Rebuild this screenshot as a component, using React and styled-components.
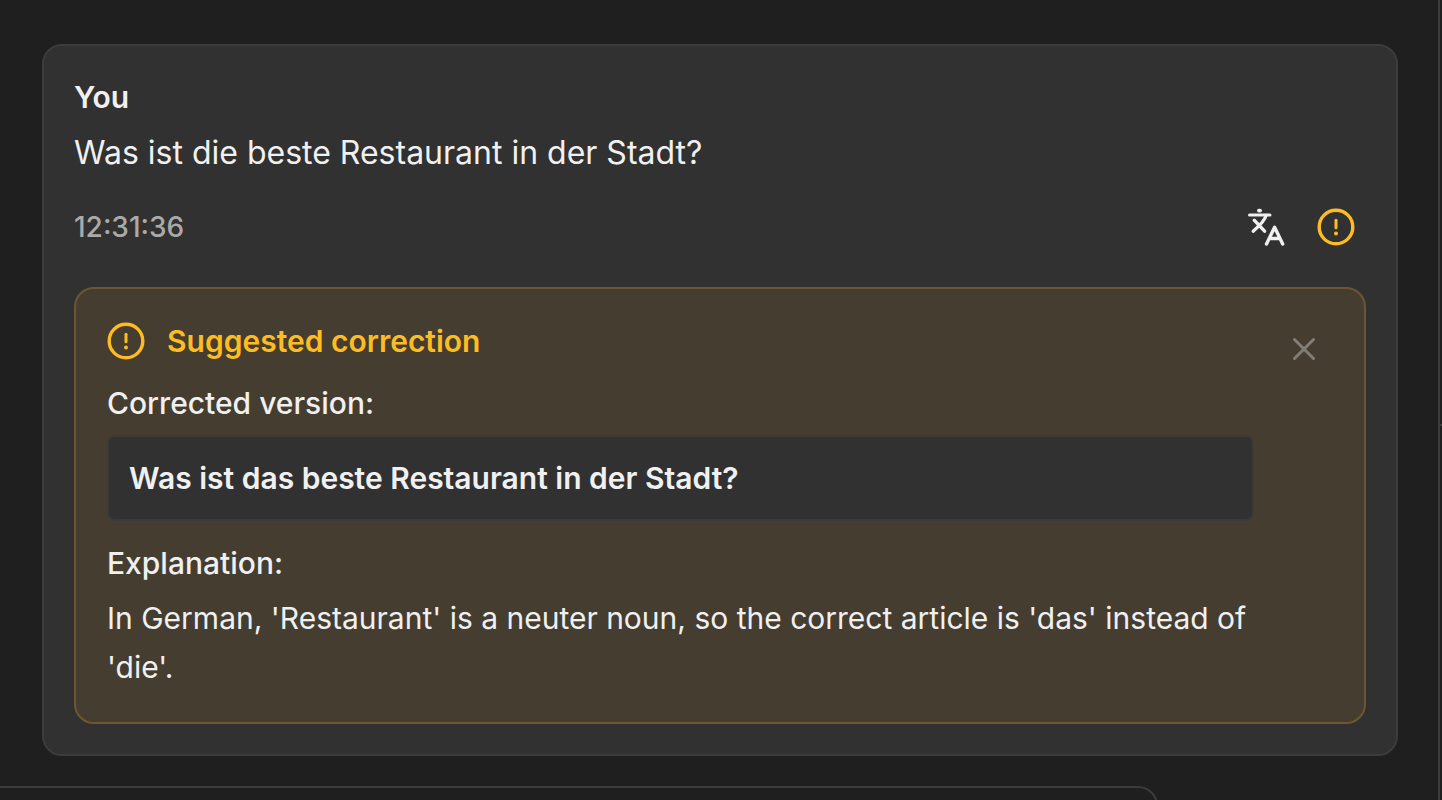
import React from 'react'
import styled, { createGlobalStyle } from 'styled-components'

const App = () => {
  return (
    <>
      <GlobalStyle />
      <Page>
        <Chat>
          <Message>
            <Author>You</Author>
            <MessageText>Was ist die beste Restaurant in der Stadt?</MessageText>
            <MessageFooter>
              <Time>12:31:36</Time>
              <Actions>
                <IconButton type="button" aria-label="Translate">
                  <TranslateIcon />
                </IconButton>
                <IconButton type="button" aria-label="Show correction" $warning>
                  <AlertIcon />
                </IconButton>
              </Actions>
            </MessageFooter>
            <Correction>
              <CorrectionBody>
                <CorrectionTitle>
                  <AlertIcon />
                  Suggested correction
                </CorrectionTitle>
                <Label>Corrected version:</Label>
                <Corrected>Was ist das beste Restaurant in der Stadt?</Corrected>
                <Label>Explanation:</Label>
                <Explanation>
                  In German, 'Restaurant' is a neuter noun, so the correct article is 'das' instead of 'die'.
                </Explanation>
              </CorrectionBody>
              <CloseButton type="button" aria-label="Dismiss">
                <CloseIcon />
              </CloseButton>
            </Correction>
          </Message>
          <Reply />
        </Chat>
        <Side>
          <SideTop />
        </Side>
      </Page>
    </>
  )
}

export default App

const AlertIcon = () => (
  <svg width="38" height="38" viewBox="0 0 38 38" fill="none" stroke="currentColor" strokeLinecap="round">
    <circle cx="19" cy="19" r="16.8" strokeWidth="3.4" />
    <path d="M19 12.2v7.6" strokeWidth="3" />
    <circle cx="19" cy="25.4" r="2" fill="currentColor" stroke="none" />
  </svg>
)

const TranslateIcon = () => (
  <svg width="38" height="38" viewBox="0 0 38 38" fill="none" stroke="currentColor" strokeWidth="3.4" strokeLinecap="round" strokeLinejoin="round">
    <path d="M2.5 7h20.5" strokeWidth="3" />
    <path d="M11.9 2.6h1.2" strokeWidth="3.8" />
    <path d="M19 7.5C18 12 14.5 16 6.2 23.2M7.2 12.2L17.6 23.2" />
    <path d="M19.5 36L27.6 19.2 35.7 36M22.5 30.5h10.5" />
  </svg>
)

const CloseIcon = () => (
  <svg width="24" height="24" viewBox="0 0 24 24" fill="none" stroke="currentColor" strokeWidth="3" strokeLinecap="round">
    <path d="M2.5 2.5l19 19M21.5 2.5l-19 19" />
  </svg>
)

const GlobalStyle = createGlobalStyle`
  * {
    box-sizing: border-box;
  }
  body {
    margin: 0;
    background: #1f1f1f;
    color: #f0f0f0;
    font-family: Inter, "Liberation Sans", sans-serif;
  }
  p, h2, h3 {
    margin: 0;
  }
`

const Page = styled.div`
  display: flex;
  height: 100vh;
  overflow: hidden;
`

const Chat = styled.main`
  flex: 1;
  min-width: 0;
  padding-top: 44px;
  border-right: 2px solid #3c3c3c;
`

const Side = styled.aside`
  width: 2px;
`

const SideTop = styled.div`
  height: 426px;
  border-bottom: 2px solid #3c3c3c;
`

const Message = styled.article`
  margin: 0 40px 30px 42px;
  padding: 30px;
  background: #313131;
  border: 2px solid #3c3c3c;
  border-radius: 20px;
`

const Author = styled.h2`
  font-size: 30px;
  line-height: 42px;
  font-weight: 600;
`

const MessageText = styled.p`
  margin-top: 10px;
  font-size: 32px;
  line-height: 50px;
`

const MessageFooter = styled.div`
  display: flex;
  align-items: center;
  justify-content: space-between;
  height: 66px;
  margin-top: 16px;
  padding-right: 11px;
`

const Time = styled.time`
  color: #acaaa8;
  font-size: 28px;
  font-weight: 500;
`

const Actions = styled.div`
  display: flex;
  gap: 32px;
`

const IconButton = styled.button`
  display: flex;
  padding: 0;
  border: none;
  background: none;
  cursor: pointer;
  color: ${props => props.$warning ? '#fdbd22' : '#f0f0f0'};
`

const Correction = styled.section`
  display: flex;
  align-items: flex-start;
  justify-content: space-between;
  margin-top: 27px;
  padding: 28px 48px 30px 31px;
  background: #453d30;
  border: 2px solid #6e5730;
  border-radius: 20px;
`

const CorrectionBody = styled.div`
  flex: 1;
  min-width: 0;
  margin-right: 38px;
`

const CorrectionTitle = styled.h3`
  display: flex;
  align-items: center;
  gap: 22px;
  color: #fdbd22;
  font-size: 30px;
  line-height: 48px;
  font-weight: 600;
`

const Label = styled.p`
  margin-top: 14px;
  font-size: 30px;
  line-height: 48px;
  font-weight: 500;
`

const Corrected = styled.p`
  margin: 8px 0 18px;
  padding: 16px 20px;
  background: #313131;
  border: 2px solid #3a3a39;
  border-radius: 8px;
  font-size: 30px;
  line-height: 50px;
  font-weight: 600;
`

const Explanation = styled.p`
  margin-top: 7px;
  font-size: 30px;
  line-height: 49px;
`

const CloseButton = styled(IconButton)`
  margin-top: 20px;
  color: #817d78;
`

const Reply = styled.div`
  height: 200px;
  margin-right: 280px;
  border: 2px solid #3c3c3c;
  border-left: none;
  border-top-right-radius: 20px;
`
